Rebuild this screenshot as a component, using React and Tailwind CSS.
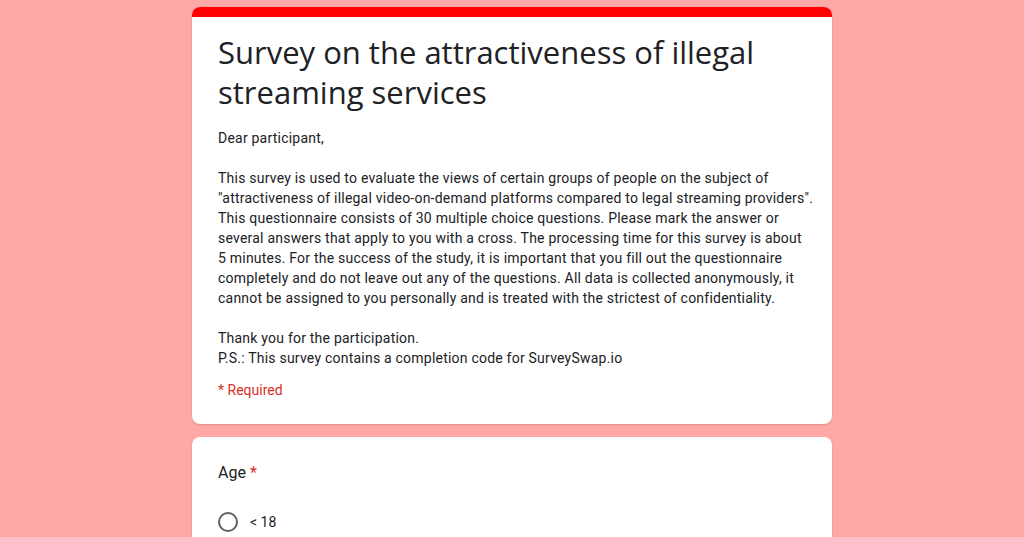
const lines = [
  "This survey is used to evaluate the views of certain groups of people on the subject of",
  "\"attractiveness of illegal video-on-demand platforms compared to legal streaming providers\".",
  "This questionnaire consists of 30 multiple choice questions. Please mark the answer or",
  "several answers that apply to you with a cross. The processing time for this survey is about",
  "5 minutes. For the success of the study, it is important that you fill out the questionnaire",
  "completely and do not leave out any of the questions. All data is collected anonymously, it",
  "cannot be assigned to you personally and is treated with the strictest of confidentiality.",
];

export default function App() {
  return (
    <div className="min-h-[537px] w-full bg-[#ffa8a8] pt-[7px] flex flex-col items-center gap-[13px]">
      <div className="w-[640px] rounded-lg bg-white overflow-hidden shadow-[0_1px_2px_rgba(0,0,0,0.15)]">
        <div className="h-[10px] bg-[#ff0000]" />
        <div className="px-[26px] pt-[15px] pb-[24px] font-['Roboto',sans-serif] text-[#202124]">
          <h1 className="text-[31px] leading-[40px] font-normal font-['Open_Sans','Roboto',sans-serif]">
            Survey on the attractiveness of illegal
            <br />
            streaming services
          </h1>
          <div className="mt-[16px] text-[14px] leading-[20px] tracking-[0.22px] whitespace-nowrap">
            <p>Dear participant,</p>
            <p className="h-[20px]" />
            {lines.map((l, i) => (
              <p key={i}>{l}</p>
            ))}
            <p className="h-[20px]" />
            <p>Thank you for the participation.</p>
            <p>P.S.: This survey contains a completion code for SurveySwap.io</p>
          </div>
          <div className="mt-[12px] text-[14px] leading-[20px] text-[#d93025]">* Required</div>
        </div>
      </div>
      <div className="w-[640px] flex-1 rounded-t-lg bg-white px-[26px] pt-[24px] font-['Roboto',sans-serif] text-[#202124] shadow-[0_1px_2px_rgba(0,0,0,0.15)]">
        <div className="text-[16px] leading-[24px]">
          Age <span className="text-[#d93025]">*</span>
        </div>
        <div className="mt-[27px] flex items-center gap-[12px]">
          <div className="h-[20px] w-[20px] rounded-full border-2 border-[#5f6368]" />
          <span className="text-[14px] leading-[20px]">&lt; 18</span>
        </div>
      </div>
    </div>
  );
}
